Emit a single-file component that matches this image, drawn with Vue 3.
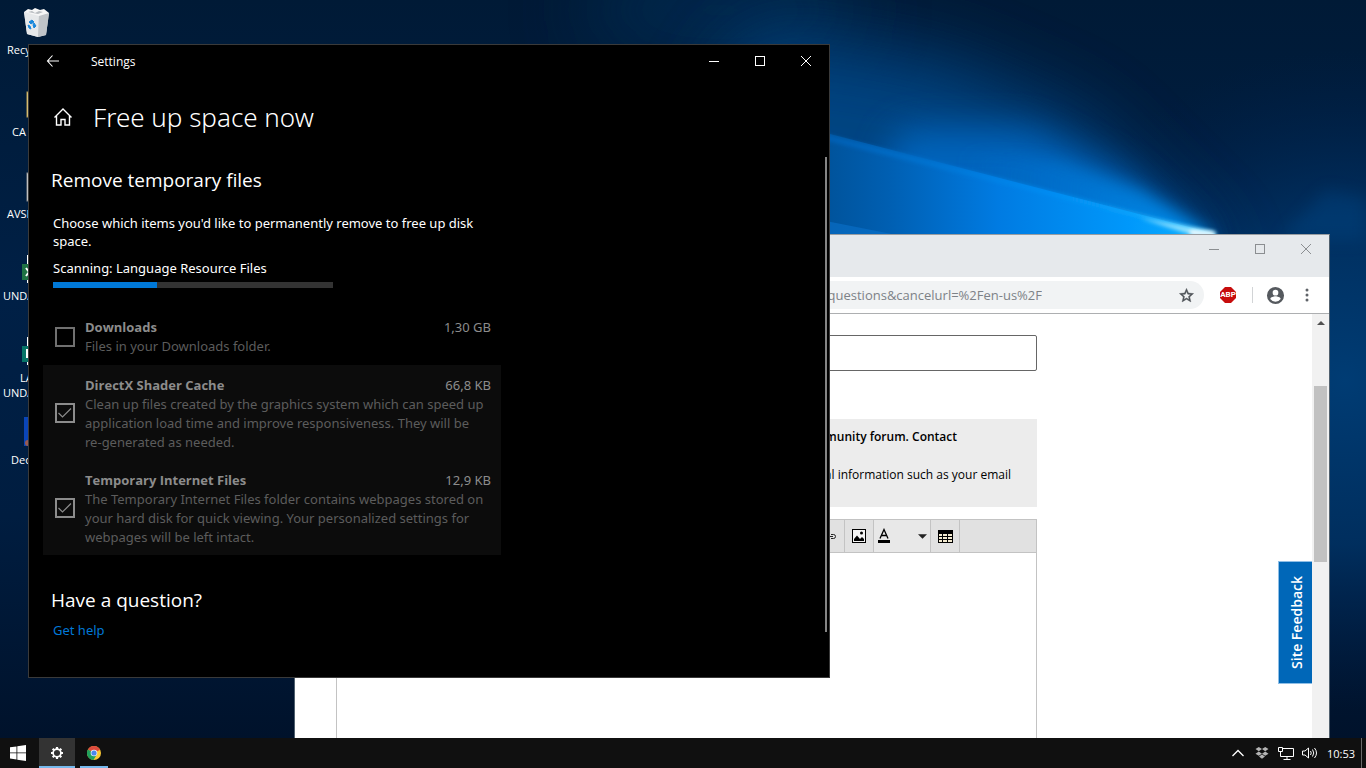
<script setup>
import { ref } from 'vue'

const shortcuts = [
  { kind: 'bin', lines: [{ text: 'Recycle Bin', indent: 7 }] },
  { kind: 'folder', lines: [{ text: 'CA', indent: 12 }] },
  { kind: 'file', lines: [{ text: 'AVSE', indent: 7 }] },
  { kind: 'excel', lines: [{ text: 'UNDA', indent: 3 }] },
  { kind: 'publisher', lines: [{ text: 'LA', indent: 20 }, { text: 'UNDA', indent: 3 }] },
  { kind: 'picture', lines: [{ text: 'Dec', indent: 11 }] },
]

const items = ref([
  { id: 'downloads', name: 'Downloads', size: '1,30 GB', text: 'Files in your Downloads folder.', checked: false },
  {
    id: 'shader',
    name: 'DirectX Shader Cache',
    size: '66,8 KB',
    text: 'Clean up files created by the graphics system which can speed up application load time and improve responsiveness. They will be re-generated as needed.',
    checked: true,
  },
  {
    id: 'internet',
    name: 'Temporary Internet Files',
    size: '12,9 KB',
    text: 'The Temporary Internet Files folder contains webpages stored on your hard disk for quick viewing. Your personalized settings for webpages will be left intact.',
    checked: true,
  },
])

const progress = 37
const address = ref('questions&cancelurl=%2Fen-us%2F')
const subject = ref('')
const message = ref('')
</script>

<template>
  <div class="screen">
    <main class="desktop">
      <svg class="wallpaper" viewBox="0 0 1366 738" preserveAspectRatio="none" aria-hidden="true">
        <defs>
          <linearGradient id="base" x1="0" y1="0" x2="0" y2="1">
            <stop offset="0" stop-color="#001a36" />
            <stop offset="0.4" stop-color="#002046" />
            <stop offset="0.7" stop-color="#001d40" />
            <stop offset="1" stop-color="#00122b" />
          </linearGradient>
          <linearGradient id="beam" gradientUnits="userSpaceOnUse" x1="780" y1="0" x2="1216" y2="0">
            <stop offset="0" stop-color="#004a8a" />
            <stop offset="0.25" stop-color="#005fb2" />
            <stop offset="0.5" stop-color="#007be2" />
            <stop offset="0.8" stop-color="#0098fb" />
            <stop offset="1" stop-color="#10b4ff" />
          </linearGradient>
          <linearGradient id="edge" gradientUnits="userSpaceOnUse" x1="820" y1="0" x2="1200" y2="0">
            <stop offset="0" stop-color="#0062ba" />
            <stop offset="0.6" stop-color="#0090f6" />
            <stop offset="1" stop-color="#2cc0ff" />
          </linearGradient>
          <linearGradient id="core" gradientUnits="userSpaceOnUse" x1="960" y1="0" x2="1200" y2="0">
            <stop offset="0" stop-color="#0078dc" stop-opacity="0" />
            <stop offset="1" stop-color="#0098fb" />
          </linearGradient>
          <radialGradient id="side" gradientUnits="userSpaceOnUse" cx="1345" cy="380" r="330">
            <stop offset="0" stop-color="#003c74" />
            <stop offset="0.5" stop-color="#003366" stop-opacity="0.8" />
            <stop offset="1" stop-color="#00204a" stop-opacity="0" />
          </radialGradient>
          <filter id="wide" filterUnits="userSpaceOnUse" x="0" y="-300" width="1700" height="1100"><feGaussianBlur stdDeviation="38" /></filter>
          <filter id="soft" filterUnits="userSpaceOnUse" x="0" y="-300" width="1700" height="1100"><feGaussianBlur stdDeviation="18" /></filter>
          <filter id="near" filterUnits="userSpaceOnUse" x="0" y="-300" width="1700" height="1100"><feGaussianBlur stdDeviation="8" /></filter>
          <filter id="faint" filterUnits="userSpaceOnUse" x="0" y="-300" width="1700" height="1100"><feGaussianBlur stdDeviation="2" /></filter>
        </defs>
        <rect width="1366" height="738" fill="url(#base)" />
        <ellipse cx="720" cy="10" rx="140" ry="50" fill="#00305c" opacity="0.6" filter="url(#wide)" />
        <rect width="1366" height="738" fill="url(#side)" />
        <path d="M1230 270 L1080 120 L940 60 L760 30 L600 270 Z" fill="#004c8e" opacity="0.85" filter="url(#wide)" />
        <path d="M1210 244 L1120 172 L1030 130 L900 130 L850 260 Z" fill="#006cca" opacity="0.8" filter="url(#soft)" />
        <path d="M1218 238 L1140 190 L1060 160 L960 150 L960 250 Z" fill="url(#core)" opacity="0.9" filter="url(#near)" />
        <path d="M780 121 L1216 234 L1216 244 L780 244 Z" fill="url(#beam)" />
        <path d="M800 128 L1216 233 L1216 236 L800 134 Z" fill="url(#edge)" opacity="0.8" filter="url(#faint)" />
        <path d="M780 212 L892 234 L892 240 L780 240 Z" fill="#0a72cc" opacity="0.6" />
        <path d="M1140 218 L1214 232 L1214 236 L1190 234 Z" fill="#9be6ff" filter="url(#faint)" />
        <path d="M1190 230 L1215 232 L1215 236 L1190 235 Z" fill="#ffffff" filter="url(#faint)" />
        <path d="M1280 240 L1326 190 L1366 198 L1366 240 Z" fill="#00488a" opacity="0.35" filter="url(#near)" />
      </svg>

      <ul class="shortcuts">
        <li v-for="(s, i) in shortcuts" :key="i" class="shortcut">
          <svg class="shortcut-icon" viewBox="0 0 32 32" aria-hidden="true">
            <g v-if="s.kind === 'bin'">
              <path d="M4 5 L29 6 L26 28 L18 30 L7 27 Z" fill="#d9dcdf" />
              <path d="M4 5 L19 8 L18 30 L7 27 Z" fill="#e6e8ea" />
              <path d="M19 8 L29 6 L26 28 L18 30 Z" fill="#c0c4c8" />
              <path d="M4 5 L8 2 L12 3 L15 1 L20 3 L24 2 L29 6 L19 9 Z" fill="#f6f6f6" />
              <path d="M8 5 L12 4 L15 6 L19 4 L23 5 L18 7 Z" fill="#b9bdc1" />
              <path d="M9 15 L12 13 L14 15 L11 17 Z M14 16 L16 19 L14 21 L13 18 Z M8 18 L10 19 L11 22 L9 21 Z" fill="#1787dc" stroke="#1787dc" />
            </g>
            <rect v-else-if="s.kind === 'folder'" x="7" y="3" width="20" height="25" fill="#f3dc92" stroke="#b89b50" />
            <rect v-else-if="s.kind === 'file'" x="7" y="2" width="20" height="28" fill="#f2f2f2" stroke="#8c8c8c" />
            <g v-else-if="s.kind === 'excel'">
              <rect x="7" y="2" width="20" height="28" fill="#fff" />
              <rect x="2" y="11" width="16" height="16" fill="#1f7244" />
              <path d="M6 15 L12 23 M12 15 L6 23" stroke="#fff" stroke-width="2" />
            </g>
            <g v-else-if="s.kind === 'publisher'">
              <rect x="7" y="2" width="20" height="28" fill="#fff" />
              <rect x="2" y="11" width="16" height="16" fill="#077568" />
              <path d="M7 23 V15 H11 V19 H7" fill="none" stroke="#fff" stroke-width="2" />
            </g>
            <g v-else>
              <rect x="4" y="0" width="24" height="29" fill="#0a45b8" />
              <circle cx="8" cy="26" r="3" fill="#9a5a50" />
            </g>
          </svg>
          <span class="shortcut-label">
            <span v-for="(l, j) in s.lines" :key="j" class="shortcut-line" :style="{ paddingLeft: l.indent + 'px' }">{{ l.text }}</span>
          </span>
        </li>
      </ul>

      <section class="browser">
        <header class="tabstrip">
          <button class="caption" aria-label="Minimize"><svg viewBox="0 0 10 10"><path d="M0 5.5 H10" /></svg></button>
          <button class="caption" aria-label="Maximize"><svg viewBox="0 0 10 10"><rect x="0.5" y="0.5" width="9" height="9" /></svg></button>
          <button class="caption" aria-label="Close"><svg viewBox="0 0 10 10"><path d="M0 0 L10 10 M10 0 L0 10" /></svg></button>
        </header>
        <div class="toolbar">
          <div class="omnibox">
            <input v-model="address" class="address" type="text" aria-label="Address" />
            <button class="plain star" aria-label="Bookmark this page">
              <svg viewBox="0 0 24 24"><path d="M22 9.24l-7.19-.62L12 2 9.19 8.63 2 9.24l5.46 4.73L5.82 21 12 17.27 18.18 21l-1.63-7.03L22 9.24zM12 15.4l-3.76 2.27 1-4.28-3.32-2.88 4.38-.38L12 6.1l1.71 4.04 4.38.38-3.32 2.88 1 4.28L12 15.4z" fill="#4d5156" stroke="#4d5156" stroke-width="0.6" /></svg>
            </button>
          </div>
          <button class="plain abp">
            <svg class="abp-shape" viewBox="0 0 16 16" aria-hidden="true"><path d="M5 0 H11 L16 5 V11 L11 16 H5 L0 11 V5 Z" fill="#c70d0d" /></svg>
            <span class="abp-text">ABP</span>
          </button>
          <span class="divider"></span>
          <button class="plain avatar" aria-label="Profile">
            <svg viewBox="0 0 20 20"><path d="M10 1a9 9 0 1 0 0 18 9 9 0 0 0 0-18zm0 3a3 3 0 1 1 0 6 3 3 0 0 1 0-6zm0 12.500a6.500 6.500 0 0 1-5.400-2.900c0-1.800 3.600-2.800 5.400-2.800s5.400 1 5.400 2.800A6.500 6.500 0 0 1 10 16.500z" fill="#55595e" /></svg>
          </button>
          <button class="plain dots" aria-label="Menu">
            <svg viewBox="0 0 4 16"><circle cx="2" cy="3" r="1.500" /><circle cx="2" cy="8" r="1.500" /><circle cx="2" cy="13" r="1.500" /></svg>
          </button>
        </div>
        <div class="viewport">
          <div class="page">
            <input v-model="subject" class="subject" type="text" aria-label="Subject" />
            <div class="notice">
              <p class="notice-strong">community forum. Contact</p>
              <p class="notice-text">personal information such as your email</p>
            </div>
            <div class="editor">
              <div class="editor-bar">
                <button class="tool" aria-label="Link">
                  <svg viewBox="0 0 16 16"><path d="M7 5.500 H4 a2.500 2.500 0 0 0 0 5 H7 M9 6.500 H11.500 a1.500 1.500 0 0 1 0 4 H9 M3 8.500 H11" fill="none" stroke="#222" /></svg>
                </button>
                <button class="tool" aria-label="Image">
                  <svg viewBox="0 0 16 16"><rect x="1.500" y="1.500" width="13" height="13" fill="#f4f4f4" stroke="#000" /><path d="M3 13 V11 L6 7.500 L9 11 L11 9 L13 11 V13 Z" fill="#000" /><circle cx="10.500" cy="5" r="1.500" /></svg>
                </button>
                <button class="tool color-tool" aria-label="Text colour">
                  <svg viewBox="0 0 16 16"><path d="M3 10.500 L7 1.500 L11 10.500 M4.500 7.500 H9.500" fill="none" stroke="#000" stroke-width="1.300" /><rect x="1" y="12" width="12" height="3" /></svg>
                  <svg class="drop" viewBox="0 0 10 5"><path d="M0 0 H10 L5 5 Z" fill="#222" /></svg>
                </button>
                <button class="tool" aria-label="Table">
                  <svg viewBox="0 0 16 16"><rect x="1" y="2" width="15" height="13" /><path d="M2 6 H5 V8 H2 Z M6 6 H10 V8 H6 Z M11 6 H15 V8 H11 Z M2 9 H5 V11 H2 Z M6 9 H10 V11 H6 Z M11 9 H15 V11 H11 Z M2 12 H5 V14 H2 Z M6 12 H10 V14 H6 Z M11 12 H15 V14 H11 Z" fill="#f3ead0" /></svg>
                </button>
              </div>
              <textarea v-model="message" class="message" aria-label="Message"></textarea>
            </div>
          </div>
          <button class="feedback">Site Feedback</button>
          <div class="scroll">
            <svg class="scroll-arrow" viewBox="0 0 8 4" aria-hidden="true"><path d="M0 4 L4 0 L8 4 Z" fill="#505050" /></svg>
            <span class="scroll-thumb"></span>
          </div>
        </div>
      </section>

      <section class="settings">
        <header class="titlebar">
          <button class="back" aria-label="Back"><svg viewBox="0 0 12 12"><path d="M0 6 H12 M5.500 0.500 L0.500 6 L5.500 11.500" /></svg></button>
          <span class="app-name">Settings</span>
          <button class="caption" aria-label="Minimize"><svg viewBox="0 0 10 10"><path d="M0 5.500 H10" /></svg></button>
          <button class="caption" aria-label="Maximize"><svg viewBox="0 0 10 10"><rect x="0.500" y="0.500" width="9" height="9" /></svg></button>
          <button class="caption" aria-label="Close"><svg viewBox="0 0 10 10"><path d="M0 0 L10 10 M10 0 L0 10" /></svg></button>
        </header>
        <div class="heading">
          <button class="home" aria-label="Home"><svg viewBox="0 0 18 18"><path d="M0.500 9.500 L9 1 L17.500 9.500 M2.500 8 V17 H7 V11.500 H11 V17 H15.500 V8" /></svg></button>
          <h1>Free up space now</h1>
        </div>
        <div class="body">
          <div class="content">
            <h2>Remove temporary files</h2>
            <p class="intro">Choose which items you'd like to permanently remove to free up disk space.</p>
            <p id="scan" class="scan">Scanning: Language Resource Files</p>
            <div class="track" role="progressbar" aria-labelledby="scan" :aria-valuenow="progress">
              <div class="fill" :style="{ width: progress + '%' }"></div>
            </div>
            <div class="items">
              <label v-for="item in items" :key="item.id" class="item" :class="{ selected: item.checked }" :for="item.id">
                <span class="box">
                  <input :id="item.id" v-model="item.checked" type="checkbox" />
                  <svg v-if="item.checked" class="tick" viewBox="0 0 14 10" aria-hidden="true"><path d="M0.500 5 L4.500 9 L13 0.500" /></svg>
                </span>
                <span class="info">
                  <span class="line"><b>{{ item.name }}</b><span>{{ item.size }}</span></span>
                  <span class="desc">{{ item.text }}</span>
                </span>
              </label>
            </div>
            <h2 class="question">Have a question?</h2>
            <a class="help" href="#help">Get help</a>
          </div>
          <span class="body-scroll"></span>
        </div>
      </section>
    </main>

    <footer class="taskbar">
      <button class="task start" aria-label="Start">
        <svg viewBox="0 0 16 16"><path d="M0 2.300 L6.500 1.400 V7.500 H0 Z M7.300 1.300 L16 0 V7.500 H7.300 Z M0 8.300 H6.500 V14.500 L0 13.600 Z M7.300 8.300 H16 V16 L7.300 14.700 Z" fill="#fff" /></svg>
      </button>
      <button class="task active" aria-label="Settings">
        <svg viewBox="0 0 14 14"><circle cx="7" cy="7" r="3.900" fill="none" stroke="#fff" stroke-width="1.700" /><path d="M7 1 V3 M7 11 V13 M1 7 H3 M11 7 H13 M2.700 2.700 L4.200 4.200 M9.800 9.800 L11.300 11.300 M11.300 2.700 L9.800 4.200 M4.200 9.800 L2.700 11.300" stroke="#fff" stroke-width="2.200" /></svg>
      </button>
      <button class="task chrome" aria-label="Chrome">
        <svg viewBox="0 0 14 14">
          <circle cx="7" cy="7" r="7" fill="#fcc934" />
          <path d="M7 7 L0.900 3.500 A7 7 0 0 1 13.100 3.800 Z" fill="#dd4b3e" />
          <path d="M7 7 L0.900 3.500 A7 7 0 0 0 6.500 14 L9.500 9 Z" fill="#1fa15d" />
          <circle cx="7" cy="7" r="3.300" fill="#f5f5f5" /><circle cx="7" cy="7" r="2.600" fill="#4a87ee" />
        </svg>
      </button>
      <div class="tray">
        <button class="tray-icon" aria-label="Show hidden icons"><svg viewBox="0 0 16 16"><path d="M2.500 11 L8 5.500 L13.500 11" fill="none" stroke="#fff" stroke-width="1.300" /></svg></button>
        <button class="tray-icon" aria-label="Dropbox"><svg viewBox="0 0 16 16"><path d="M4.800 2 L8 4 L4.800 6.200 L1.500 4 Z M11.200 2 L14.500 4 L11.200 6.200 L8 4 Z M4.800 6.600 L8 8.700 L4.800 10.800 L1.500 8.700 Z M11.200 6.600 L14.500 8.700 L11.200 10.800 L8 8.700 Z M8 9.600 L11 11.600 L8 13.800 L5 11.600 Z" fill="#b4b4b4" /></svg></button>
        <button class="tray-icon" aria-label="Network"><svg viewBox="0 0 16 16"><path d="M5 3.500 H15.500 V11.500 H2.500 V7 M9 11.500 V14.500 M5.500 14.500 H12.500 M0.500 2.500 H4.500 V6.500 H0.500 Z M2.500 6.500 V9" fill="none" stroke="#fff" /></svg></button>
        <button class="tray-icon" aria-label="Volume"><svg viewBox="0 0 16 16"><path d="M0.500 6 H3 L6.500 3 V13 L3 10 H0.500 Z M8.500 6 Q10 8 8.500 10 M10.500 4.500 Q13 8 10.500 11.500 M12.500 3 Q16.500 8 12.500 13" fill="none" stroke="#fff" /></svg></button>
        <time class="clock">10:53</time>
        <span class="peek"></span>
      </div>
    </footer>
  </div>
</template>

<style>
body {
  margin: 0;
  background: #001b3b;
}
</style>

<style scoped>
.screen {
  display: flex;
  flex-direction: column;
  height: 100vh;
  overflow: hidden;
  font-family: "Open Sans", "Noto Sans", sans-serif;
  color: #fff;
}
.screen *,
.screen *::before {
  box-sizing: border-box;
}
button,
input,
textarea {
  margin: 0;
  padding: 0;
  border: 0;
  border-radius: 0;
  background: none;
  color: inherit;
  font: inherit;
}
h1,
h2,
p,
ul {
  margin: 0;
  padding: 0;
}
svg {
  display: block;
}
.desktop {
  position: relative;
  flex: 1;
  min-height: 0;
  overflow: hidden;
}
.wallpaper {
  position: absolute;
  inset: 0;
  width: 100%;
  height: 100%;
}
.shortcuts {
  position: relative;
  width: 76px;
  list-style: none;
}
.shortcut {
  height: 82px;
  padding-top: 7px;
  font-size: 11px;
  line-height: 15px;
}
.shortcut-icon {
  width: 32px;
  height: 32px;
  margin: 0 0 3px 20px;
}
.shortcut-line {
  display: block;
  white-space: nowrap;
}

/* Caption buttons shared by both windows */
.caption {
  display: flex;
  align-items: center;
  justify-content: center;
  width: 46px;
  height: 32px;
}
.caption svg {
  width: 10px;
  height: 10px;
  overflow: visible;
  fill: none;
  stroke: currentColor;
}

/* Browser window */
.browser {
  position: absolute;
  inset: 234px 36px 0 294px;
  display: flex;
  flex-direction: column;
  border: 1px solid #50606e;
  border-top-color: #999da1;
  border-bottom: 0;
  background: #fff;
  color: #000;
}
.tabstrip {
  display: flex;
  justify-content: flex-end;
  height: 42px;
  background: #e6e9ec;
  color: #8b8e91;
}
.tabstrip .caption {
  height: 28px;
}
.toolbar {
  display: flex;
  align-items: center;
  gap: 8px;
  height: 37px;
  padding: 0 12px 0 120px;
  border-bottom: 1px solid #adafb1;
}
.omnibox {
  display: flex;
  flex: 1;
  align-items: center;
  height: 28px;
  padding-right: 8px;
  border-radius: 14px;
  background: #f1f3f4;
}
.address {
  flex: 1;
  min-width: 0;
  padding-right: 134px;
  color: #7d8287;
  font-size: 13px;
  text-align: right;
}
.plain {
  display: flex;
  align-items: center;
  justify-content: center;
}
.star {
  width: 20px;
}
.star svg {
  width: 17px;
  height: 17px;
}
.abp {
  display: grid;
  width: 32px;
  height: 28px;
  place-items: center;
}
.abp > * {
  grid-area: 1 / 1;
}
.abp-shape {
  width: 16px;
  height: 16px;
}
.abp-text {
  color: #fff;
  font-family: Roboto, sans-serif;
  font-size: 8px;
  font-weight: 700;
  line-height: 8px;
}
.divider {
  width: 1px;
  height: 16px;
  background: #d2d4d6;
}
.avatar {
  width: 28px;
}
.avatar svg {
  width: 19px;
  height: 19px;
}
.dots {
  width: 20px;
}
.dots svg {
  width: 4px;
  height: 16px;
  fill: #5f6368;
}
.viewport {
  position: relative;
  display: flex;
  flex: 1;
  min-height: 0;
}
.page {
  display: flex;
  flex: 1;
  flex-direction: column;
  padding: 21px 275px 0 41px;
}
.subject {
  height: 36px;
  flex: none;
  border: 1px solid #666;
  border-radius: 2px;
  padding: 0 8px;
}
.notice {
  margin-top: 48px;
  height: 88px;
  flex: none;
  padding: 8px 26px 0 0;
  background: #ececec;
  font-size: 12px;
  line-height: 19px;
  text-align: right;
}
.notice-strong {
  padding-right: 54px;
  font-weight: 600;
}
.notice-text {
  margin-top: 19px;
}
.editor {
  display: flex;
  flex: 1;
  flex-direction: column;
  margin-top: 12px;
  border: 1px solid #c3c3c3;
  border-bottom: 0;
}
.editor-bar {
  display: flex;
  justify-content: flex-end;
  height: 33px;
  padding-right: 76px;
  border-bottom: 1px solid #c3c3c3;
  background: #e1e1e1;
}
.tool {
  display: flex;
  align-items: center;
  justify-content: center;
  width: 29px;
  border: solid #c3c3c3;
  border-width: 0 1px 0 0;
}
.tool svg {
  width: 16px;
  height: 16px;
}
.color-tool {
  width: 57px;
  justify-content: space-between;
  padding: 0 3px;
  background: #e8e8e8;
}
.color-tool .drop {
  width: 9px;
  height: 5px;
}
.message {
  flex: 1;
  resize: none;
}
.feedback {
  position: absolute;
  top: 247px;
  right: 17px;
  width: 34px;
  height: 123px;
  border: 1px solid #8fbfe6;
  border-right: 0;
  padding-left: 2px;
  background: #0067b8;
  color: #fff;
  font-size: 14px;
  font-weight: 600;
  writing-mode: sideways-lr;
}
.scroll {
  display: flex;
  flex-direction: column;
  align-items: center;
  width: 17px;
  background: #f1f1f1;
}
.scroll-arrow {
  width: 8px;
  height: 4px;
  margin-top: 7px;
}
.scroll-thumb {
  width: 13px;
  height: 176px;
  margin-top: 61px;
  background: #c1c1c1;
}

/* Settings window */
.settings {
  position: absolute;
  inset: 44px 536px 60px 28px;
  display: flex;
  flex-direction: column;
  border: 1px solid #3a3a3a;
  background: #000;
}
.titlebar {
  display: flex;
  align-items: center;
  height: 32px;
}
.back {
  width: 48px;
  padding-left: 18px;
}
.back svg {
  width: 12px;
  height: 12px;
  overflow: visible;
  fill: none;
  stroke: #fff;
  stroke-width: 1.1;
}
.app-name {
  flex: 1;
  padding-left: 14px;
  font-size: 12px;
}
.heading {
  display: flex;
  align-items: center;
  gap: 21px;
  height: 80px;
  padding-left: 25px;
}
.home svg {
  width: 18px;
  height: 18px;
  fill: none;
  stroke: #fff;
  stroke-width: 1.4;
}
h1 {
  font-family: "Noto Sans", "Open Sans", sans-serif;
  font-size: 26px;
  font-weight: 300;
  line-height: 36px;
}
.body {
  display: flex;
  flex: 1;
  min-height: 0;
  justify-content: space-between;
  padding-right: 2px;
}
.content {
  width: 472px;
  padding: 9px 0 0 24px;
  font-family: "Noto Sans", "Open Sans", sans-serif;
  font-size: 13px;
}
h2 {
  margin-left: -2px;
  font-family: "Open Sans", "Noto Sans", sans-serif;
  font-size: 19px;
  font-weight: 400;
  line-height: 28px;
}
.intro {
  margin-top: 20px;
  line-height: 18px;
}
.scan {
  margin-top: 9px;
  line-height: 18px;
}
.track {
  width: 280px;
  height: 6px;
  margin-top: 5px;
  background: #333;
}
.fill {
  height: 6px;
  background: #0078d7;
}
.items {
  margin: 19px 0 0 -10px;
}
.item {
  display: flex;
  align-items: center;
  min-height: 58px;
  padding: 9px 10px 8px 12px;
}
.item.selected {
  background: #0c0c0c;
}
.box {
  display: grid;
  width: 20px;
  height: 20px;
  margin-right: 10px;
  place-items: center;
}
.box > * {
  grid-area: 1 / 1;
}
.box input {
  width: 20px;
  height: 20px;
  appearance: none;
  border: 2px solid #707070;
}
.selected .box input {
  border-color: #8c8c8c;
}
.tick {
  width: 14px;
  height: 10px;
  fill: none;
  stroke: #8c8c8c;
  stroke-width: 1.2;
}
.info {
  flex: 1;
  align-self: flex-start;
  min-width: 0;
}
.line {
  display: flex;
  justify-content: space-between;
  padding-top: 1px;
  color: #8c8c8c;
  line-height: 20px;
}
.line b {
  font-family: "Open Sans", "Noto Sans", sans-serif;
  font-weight: 700;
}
.desc {
  display: block;
  padding-right: 4px;
  color: #5c5c5c;
  line-height: 19px;
}
.question {
  margin-top: 31px;
}
.help {
  display: inline-block;
  margin-top: 7px;
  color: #0078d7;
  line-height: 18px;
  text-decoration: none;
}
.body-scroll {
  width: 2px;
  height: 475px;
  background: #858585;
}

/* Taskbar */
.taskbar {
  display: flex;
  height: 30px;
  background: #101010;
}
.task {
  display: flex;
  align-items: center;
  justify-content: center;
  width: 36px;
  border-bottom: 2px solid transparent;
  padding-top: 2px;
}
.task svg {
  width: 14px;
  height: 14px;
}
.start svg {
  width: 16px;
  height: 16px;
}
.active {
  margin-left: 3px;
  border-color: #76b9ed;
  background: #333;
}
.chrome {
  width: 28px;
  margin-left: 5px;
  border-color: #76b9ed;
}
.tray {
  display: flex;
  align-items: center;
  gap: 8px;
  margin-left: auto;
}
.tray-icon svg {
  width: 16px;
  height: 16px;
}
.clock {
  margin-left: 1px;
  font-size: 11px;
}
.peek {
  width: 5px;
  height: 30px;
  margin-left: -2px;
  border-left: 1px solid #6a6a6a;
}
</style>
